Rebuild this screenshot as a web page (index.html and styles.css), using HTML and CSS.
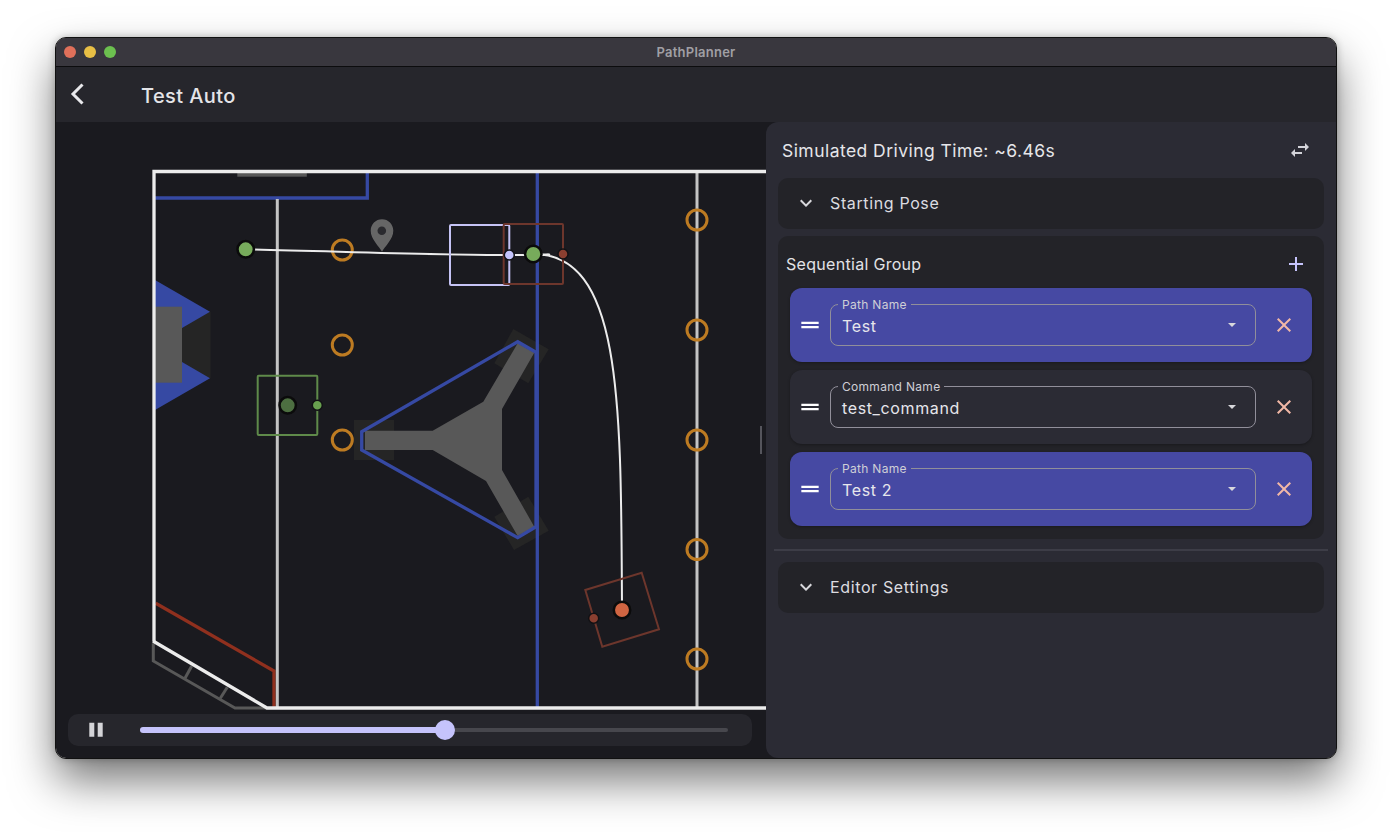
FILE: index.html
```html
<!DOCTYPE html>
<html lang="en">
<head>
<meta charset="utf-8">
<title>PathPlanner</title>
<link rel="stylesheet" href="styles.css">
</head>
<body>
<div class="window">
  <header class="titlebar">
    <div class="lights"><span class="light red"></span><span class="light yellow"></span><span class="light green"></span></div>
    <div class="window-title">PathPlanner</div>
  </header>
  <div class="appbar">
    <svg class="back" width="24" height="24" viewBox="0 0 24 24"><path d="M16.500 2.500 7 12l9.500 9.500" fill="none" stroke="#e8e8ec" stroke-width="3"/></svg>
    <h1 class="app-title">Test Auto</h1>
  </div>
  <div class="main">
    <section class="editor">
      <svg class="field" width="710" height="592" viewBox="56 122 710 592">
        <g fill="#252525">
          <rect x="182" y="312" width="28.500" height="66"/>
          <rect x="354" y="420" width="40" height="40"/>
          <polygon points="513.300,329 548.700,349.300 528.300,383.300 494.300,363.300"/>
          <polygon points="528.300,496.700 548.700,530.700 514,550 494.300,516.700"/>
        </g>
        <g fill="#3649a3">
          <polygon points="155,280 210,311.700 182,328 182,343 155,343"/>
          <polygon points="155,410 210,378.300 182,362 182,345 155,345"/>
        </g>
        <g fill="#585858">
          <rect x="155" y="306.700" width="27" height="76"/>
          <rect x="237.300" y="173" width="69.500" height="3.700"/>
          <polygon points="365,430.700 432.700,430.700 483.300,401.700 517.700,343.300 534.300,352.700 502,409 502,470 534.300,526.700 517.700,536 486,481 432.700,450 365,450"/>
        </g>
        <g fill="none" stroke="#3649a3" stroke-width="3.300">
          <polyline points="155,198 367.300,198 367.300,173"/>
          <line x1="537.300" y1="173" x2="537.300" y2="707"/>
          <polygon points="361.700,431.700 517.700,341.700 536,352.300 536,526.700 517.700,537.700 361.700,450"/>
        </g>
        <polyline points="155.700,603.300 274,671 274,706.700" fill="none" stroke="#90301e" stroke-width="3.300"/>
        <g fill="none" stroke="#585858" stroke-width="3">
          <polyline points="153.300,643.300 153.300,661 235,708 266.700,708"/>
          <line x1="191.700" y1="666" x2="185" y2="678.300"/>
          <line x1="227.300" y1="687.300" x2="220.300" y2="698.300"/>
        </g>
        <g stroke="#c4c4c4" stroke-width="3">
          <line x1="277.300" y1="199" x2="277.300" y2="707"/>
          <line x1="697" y1="173" x2="697" y2="707"/>
        </g>
        <polyline points="154,641.500 154,171.500 766,171.500" fill="none" stroke="#ececec" stroke-width="3.300"/>
        <polyline points="153,641 267,708 766,708" fill="none" stroke="#ececec" stroke-width="3.300"/>
        <g fill="none" stroke="#bd7b22" stroke-width="3">
          <circle cx="342.300" cy="250" r="10"/>
          <circle cx="342.300" cy="345" r="10"/>
          <circle cx="342.300" cy="440" r="10"/>
          <circle cx="697" cy="220" r="10"/>
          <circle cx="697" cy="330" r="10"/>
          <circle cx="697" cy="440" r="10"/>
          <circle cx="697" cy="549.500" r="10"/>
          <circle cx="697" cy="659" r="10"/>
        </g>
        <path d="M382 251.700c-2.500-5-11.300-12.500-11.300-21 0-6.500 5-11.400 11.300-11.400s11.300 4.900 11.300 11.400c0 8.500-8.800 16-11.300 21z" fill="#666"/>
        <circle cx="381.800" cy="230.700" r="4.300" fill="#2a2a2e"/>
        <path d="M245.700 249.300 C 330 251, 430 255, 509 255 S 525 254, 533.300 254 C 622 254, 621 400, 622 610" fill="none" stroke="#ececec" stroke-width="2"/>
        <rect class="box box-purple" x="450" y="225" width="59.300" height="60" rx="1"/>
        <rect class="box box-red" x="503.700" y="224" width="59.300" height="60" rx="1"/>
        <rect class="box box-green" x="257.700" y="375.700" width="59.600" height="59.300" rx="1"/>
        <polygon class="box box-red" points="641.700,572.700 659,629.300 602.300,646.700 585.300,590"/>
        <g stroke="#0b0b0b" stroke-width="2.500">
          <circle cx="245.700" cy="249.300" r="8.200" fill="#77ab5b"/>
          <circle cx="287.700" cy="405.300" r="8.200" fill="#4d6f41"/>
          <circle cx="533.300" cy="254" r="8.200" fill="#77ab5b"/>
          <circle cx="622" cy="610" r="8.200" fill="#d06542"/>
        </g>
        <g stroke="#111114" stroke-width="1.500">
          <circle cx="317.300" cy="405.300" r="5" fill="#68a04f"/>
          <circle cx="509.300" cy="255" r="5" fill="#c4c3fb"/>
          <circle cx="563" cy="254" r="5" fill="#8a3f30"/>
          <circle cx="593.700" cy="618.300" r="5" fill="#8a3f30"/>
        </g>
      </svg>
      <div class="player">
        <svg class="pause" width="24" height="24" viewBox="0 0 24 24"><path d="M5.300 4.700h5v14h-5zM13.700 4.700h5v14h-5z" fill="#d4d4d8"/></svg>
        <div class="slider">
          <div class="slider-fill" style="width:51.900%"><span class="slider-thumb"></span></div>
        </div>
      </div>
    </section>
    <aside class="panel">
      <div class="panel-head">
        <span class="panel-title">Simulated Driving Time: ~6.46s</span>
        <svg class="swap" width="24" height="24" viewBox="0 0 24 24"><path d="M6.990 11 3 15l3.990 4v-3H14v-2H6.990v-3zM21 9l-3.990-4v3H10v2h7.010v3L21 9z" fill="#d4d4da"/></svg>
      </div>
      <div class="tile">
        <svg class="chev" width="24" height="24" viewBox="0 0 24 24"><path d="M16.590 8.590 12 13.170 7.410 8.590 6 10l6 6 6-6z" fill="#d8d8dc"/></svg>
        <span class="tile-label">Starting Pose</span>
      </div>
      <div class="group">
        <div class="group-head">
          <span class="group-title">Sequential Group</span>
          <svg class="plus" width="24" height="24" viewBox="0 0 24 24"><path d="M19 13h-6v6h-2v-6H5v-2h6V5h2v6h6v2z" fill="#c5c3fb"/></svg>
        </div>
        <div class="items">
          <div class="item item-path">
            <svg class="handle" width="26" height="26" viewBox="0 0 24 24"><path d="M20 9H4v2h16V9zM4 15h16v-2H4v2z" fill="#fff"/></svg>
            <div class="select">
              <span class="select-label">Path Name</span>
              <span class="select-value">Test</span>
              <span class="caret"></span>
            </div>
            <svg class="close" width="24" height="24" viewBox="0 0 24 24"><path d="M19 6.410 17.590 5 12 10.590 6.410 5 5 6.410 10.590 12 5 17.590 6.410 19 12 13.410 17.590 19 19 17.590 13.410 12z" fill="#f2b8a6"/></svg>
          </div>
          <div class="item item-command">
            <svg class="handle" width="26" height="26" viewBox="0 0 24 24"><path d="M20 9H4v2h16V9zM4 15h16v-2H4v2z" fill="#fff"/></svg>
            <div class="select">
              <span class="select-label">Command Name</span>
              <span class="select-value">test_command</span>
              <span class="caret"></span>
            </div>
            <svg class="close" width="24" height="24" viewBox="0 0 24 24"><path d="M19 6.410 17.590 5 12 10.590 6.410 5 5 6.410 10.590 12 5 17.590 6.410 19 12 13.410 17.590 19 19 17.590 13.410 12z" fill="#f2b8a6"/></svg>
          </div>
          <div class="item item-path">
            <svg class="handle" width="26" height="26" viewBox="0 0 24 24"><path d="M20 9H4v2h16V9zM4 15h16v-2H4v2z" fill="#fff"/></svg>
            <div class="select">
              <span class="select-label">Path Name</span>
              <span class="select-value">Test 2</span>
              <span class="caret"></span>
            </div>
            <svg class="close" width="24" height="24" viewBox="0 0 24 24"><path d="M19 6.410 17.590 5 12 10.590 6.410 5 5 6.410 10.590 12 5 17.590 6.410 19 12 13.410 17.590 19 19 17.590 13.410 12z" fill="#f2b8a6"/></svg>
          </div>
        </div>
      </div>
      <div class="divider"></div>
      <div class="tile">
        <svg class="chev" width="24" height="24" viewBox="0 0 24 24"><path d="M16.590 8.590 12 13.170 7.410 8.590 6 10l6 6 6-6z" fill="#d8d8dc"/></svg>
        <span class="tile-label">Editor Settings</span>
      </div>
    </aside>
  </div>
  <span class="splitter"></span>
</div>
</body>
</html>
```
FILE: styles.css
```css
* { box-sizing: border-box; }
html, body { margin: 0; height: 100%; }
body {
  background: #fff;
  font-family: Inter, "Liberation Sans", sans-serif;
  color: #e4e4e8;
  padding: 38px 56px 0;
  overflow: hidden;
}
.window {
  position: relative;
  width: 1280px;
  height: 720px;
  display: flex;
  flex-direction: column;
  background: #1a1a1f;
  border-radius: 10px;
  overflow: hidden;
  outline: 1px solid #111;
}
body::before {
  content: "";
  position: absolute;
  left: 56px;
  top: 38px;
  width: 1280px;
  height: 720px;
  border-radius: 10px;
  box-shadow: 0 22px 45px rgba(0, 0, 0, .55), 0 0 8px rgba(0, 0, 0, .3);
}
.titlebar {
  position: relative;
  flex: none;
  height: 29px;
  display: flex;
  align-items: center;
  justify-content: center;
  background: #39373e;
  border-bottom: 1px solid #0c0c0e;
}
.lights {
  position: absolute;
  left: 8px;
  top: 8px;
  display: flex;
  gap: 8px;
}
.light { width: 12px; height: 12px; border-radius: 50%; }
.red { background: #e0705a; }
.yellow { background: #e8bf45; }
.green { background: #6cc04f; }
.window-title {
  margin-top: -1px;
  font-size: 13px;
  font-weight: 600;
  letter-spacing: .25px;
  color: #a09fa4;
}
.appbar {
  flex: none;
  height: 55px;
  display: flex;
  align-items: center;
  background: #26262c;
  padding-left: 10px;
}
.back { margin-top: -2px; }
.app-title {
  margin: 2px 0 0 51px;
  font-size: 20px;
  font-weight: 500;
  letter-spacing: .4px;
  color: #e4e4e8;
}
.main { flex: 1; display: flex; min-height: 0; }
.editor { flex: none; width: 710px; display: flex; flex-direction: column; }
.field { display: block; flex: none; }
.box { fill: none; stroke-width: 2; }
.box-purple { stroke: #c5c3f5; }
.box-red { stroke: #6d362c; }
.box-green { stroke: #5f8a4a; }
.player {
  flex: none;
  height: 32px;
  margin: 0 14px 12px 12px;
  padding: 0 24px 0 16px;
  display: flex;
  align-items: center;
  gap: 32px;
  background: #26262c;
  border-radius: 10px;
}
.pause { flex: none; }
.slider {
  flex: 1;
  height: 4px;
  background: #47474d;
  border-radius: 2px;
  display: flex;
  align-items: center;
}
.slider-fill {
  position: relative;
  height: 6px;
  background: #c5c3fb;
  border-radius: 3px;
}
.slider-thumb {
  position: absolute;
  right: -10px;
  top: -7px;
  width: 20px;
  height: 20px;
  border-radius: 50%;
  background: #c5c3fb;
}
.panel {
  flex: 1;
  display: flex;
  flex-direction: column;
  background: #2b2b34;
  border-radius: 12px 0 0 12px;
  padding: 0 8px;
}
.panel-head {
  flex: none;
  height: 56px;
  display: flex;
  align-items: center;
  justify-content: space-between;
  padding: 0 16px 0 8px;
}
.panel-title { margin-top: 1px; font-size: 17.500px; letter-spacing: .45px; color: #e6e6ea; }
.tile {
  flex: none;
  height: 51px;
  margin: 0 4px;
  padding: 0 0 1px 16px;
  display: flex;
  align-items: center;
  gap: 12px;
  background: #232328;
  border-radius: 10px;
}
.tile-label { font-size: 16px; font-weight: 400; letter-spacing: .63px; color: #dcdce0; }
.group {
  flex: none;
  margin: 7px 4px 0;
  padding: 0 12px 13px;
  background: #232328;
  border-radius: 10px;
}
.group-head {
  height: 52px;
  padding: 4px 4px 0 0;
  margin-left: -4px;
  display: flex;
  align-items: center;
  justify-content: space-between;
}
.group-title { font-size: 16px; letter-spacing: .3px; color: #e2e2e6; }
.items { display: flex; flex-direction: column; gap: 8px; }
.item {
  height: 74px;
  display: flex;
  align-items: center;
  border-radius: 12px;
  padding: 0 16px 0 7px;
  box-shadow: 0 1px 3px rgba(0, 0, 0, .3);
}
.item-path { background: #4649a3; --item-bg: #4649a3; }
.item-command { background: #2b2b34; --item-bg: #2b2b34; }
.handle { flex: none; }
.select {
  position: relative;
  flex: 1;
  height: 42px;
  margin: 0 16px 0 7px;
  display: flex;
  align-items: center;
  padding: 2px 11px 0;
  border: 1px solid #918f9a;
  border-radius: 8px;
}
.select-label {
  position: absolute;
  left: 7px;
  top: -6px;
  height: 12px;
  padding: 0 4px;
  font-size: 12px;
  line-height: 12px;
  letter-spacing: .3px;
  color: #cfcfd6;
  background: var(--item-bg);
}
.select-value { font-size: 16px; letter-spacing: .63px; color: #e6e6ec; }
.caret {
  position: absolute;
  right: 19px;
  top: 18px;
  width: 0;
  height: 0;
  border-left: 4px solid transparent;
  border-right: 4px solid transparent;
  border-top: 4px solid #d8d8dc;
}
.close { flex: none; }
.divider {
  flex: none;
  height: 2px;
  margin: 10px 0 11px;
  background: #3d3d47;
}
.splitter {
  position: absolute;
  left: 704px;
  top: 388px;
  width: 2px;
  height: 28px;
  background: #55555c;
}
```
